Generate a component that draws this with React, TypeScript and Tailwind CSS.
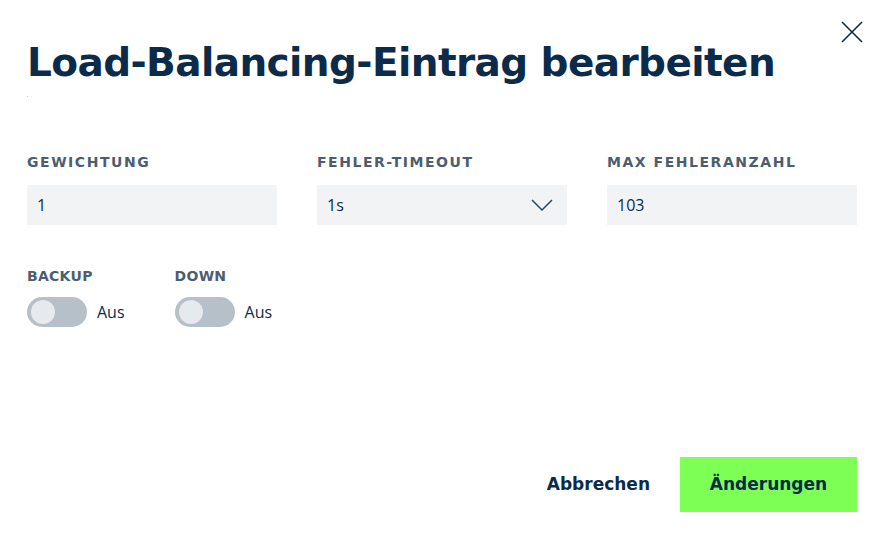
import React, { useState } from 'react';

const font = { fontFamily: '"DejaVu Sans", "Noto Sans", sans-serif' };

function Toggle({ label, on, onChange }: { label: string; on: boolean; onChange: (v: boolean) => void }) {
  return (
    <div className="flex flex-col">
      <span className="text-[14px] font-bold tracking-[0.02em] text-[#4c5d70] leading-none">{label}</span>
      <div className="flex items-center mt-[14px]">
        <button
          onClick={() => onChange(!on)}
          className="w-[60px] h-[30px] rounded-full bg-[#b5c0c9] flex items-center px-[4px]"
        >
          <span className="w-[24px] h-[24px] rounded-full bg-[#e6e9ed] block" />
        </button>
        <span className="ml-[10px] text-[16px] text-[#0c2b4b] font-['Open_Sans']">{on ? 'An' : 'Aus'}</span>
      </div>
    </div>
  );
}

export default function App() {
  const [backup, setBackup] = useState(false);
  const [down, setDown] = useState(false);

  return (
    <div className="w-[883px] h-[549px] bg-white relative pl-[27px] pr-[26px] pt-[40px]" style={font}>
      <button className="absolute left-[841px] top-[21px] w-[22px] h-[22px]">
        <svg width="22" height="22" viewBox="0 0 22 22" fill="none" stroke="#0c2b4b" strokeWidth="1.6">
          <path d="M1 1L21 21M21 1L1 21" />
        </svg>
      </button>

      <h1 className="text-[39px] font-bold text-[#0c2b4b] leading-[46px] tracking-[-0.6px]">
        Load-Balancing-Eintrag bearbeiten
      </h1>
      <div className="w-[1px] h-[1px] bg-[#f3c9a0] mt-[10px]" />

      <div className="grid grid-cols-3 gap-x-[40px] mt-[58px]">
        {[
          { label: 'GEWICHTUNG', value: '1' },
          { label: 'FEHLER-TIMEOUT', value: '1s', select: true },
          { label: 'MAX FEHLERANZAHL', value: '103' },
        ].map(f => (
          <div key={f.label} className="flex flex-col">
            <span className="text-[14px] font-bold tracking-[0.11em] text-[#4c5d70] leading-none">{f.label}</span>
            <div className="mt-[16px] h-[40px] bg-[#f2f3f5] flex items-center justify-between pl-[10px] pr-[14px]">
              <span className="text-[16px] text-[#0c2b4b] font-['Open_Sans']">{f.value}</span>
              {f.select && (
                <svg width="22" height="12" viewBox="0 0 22 12" fill="none" stroke="#24486b" strokeWidth="1.5">
                  <path d="M1 1L11 11L21 1" />
                </svg>
              )}
            </div>
          </div>
        ))}
      </div>

      <div className="flex gap-x-[50px] mt-[44px]">
        <Toggle label="BACKUP" on={backup} onChange={setBackup} />
        <Toggle label="DOWN" on={down} onChange={setDown} />
      </div>

      <div className="absolute right-[26px] bottom-[37px] flex items-center">
        <button className="text-[17px] font-bold text-[#0c2b4b] mr-[30px]">Abbrechen</button>
        <button className="w-[177px] h-[55px] bg-[#7dff55] text-[17px] font-bold text-[#0c2b4b]">Änderungen</button>
      </div>
    </div>
  );
}
